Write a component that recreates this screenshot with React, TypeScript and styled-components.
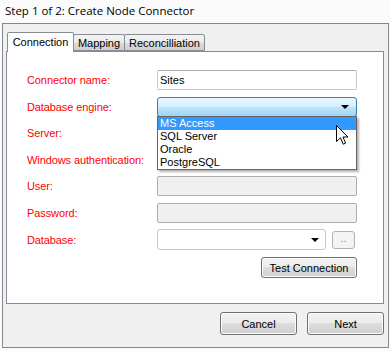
import React from "react";
import styled, { createGlobalStyle } from "styled-components";

const Global = createGlobalStyle`
  html, body { margin: 0; padding: 0; background: #fbfbfb; }
  body { font-family: "Liberation Sans", Arial, sans-serif; font-size: 11px; color: #000; }
  * { box-sizing: border-box; }
`;

const Window = styled.div`
  position: relative;
  width: 391px;
  height: 351px;
  background: #fbfbfb;
  overflow: hidden;
`;

const Title = styled.div`
  height: 23px;
  padding: 3px 0 0 5px;
  font-family: "Open Sans", "Noto Sans", sans-serif;
  font-size: 11.5px;
  line-height: 16px;
  color: #000;
`;

const Frame = styled.div`
  margin-left: 2px;
  width: 387px;
  height: 325px;
  border: 1px solid #828790;
  background: #f0f0f0;
  padding: 8px 4px 0 3px;
  display: flex;
  flex-direction: column;
`;

const TabStrip = styled.div`
  display: flex;
  align-items: flex-end;
  height: 19px;
  padding-left: 1px;
  position: relative;
  z-index: 2;
`;

const Tab = styled.div<{ $active?: boolean; $w: number }>`
  width: ${(p) => p.$w}px;
  height: ${(p) => (p.$active ? 20 : 17)}px;
  margin-bottom: ${(p) => (p.$active ? -1 : 0)}px;
  border: 1px solid #898c95;
  border-bottom: ${(p) => (p.$active ? "none" : "1px solid #898c95")};
  border-radius: 2px 2px 0 0;
  background: ${(p) =>
    p.$active ? "#ffffff" : "linear-gradient(#f3f3f3, #ebebeb 50%, #dddddd 51%, #cfcfcf)"};
  display: flex;
  align-items: center;
  justify-content: center;
  padding-bottom: ${(p) => (p.$active ? 1 : 0)}px;
  white-space: nowrap;
  & + & { margin-left: -1px; }
`;

const Panel = styled.div`
  height: 253px;
  border: 1px solid #898c95;
  background: #ffffff;
  padding: 14px 0 0 20px;
`;

const Row = styled.div<{ $h: number }>`
  display: grid;
  grid-template-columns: 130px 200px;
  align-items: center;
  height: ${(p) => p.$h}px;
`;

const Label = styled.div`
  color: #ff0000;
  white-space: nowrap;
  letter-spacing: -0.1px;
`;

const TextBox = styled.div<{ $disabled?: boolean }>`
  height: 20px;
  width: 200px;
  border: 1px solid ${(p) => (p.$disabled ? "#adadad" : "#c5c9cf")};
  border-top-color: ${(p) => (p.$disabled ? "#adadad" : "#abadb3")};
  border-radius: 2px;
  background: ${(p) => (p.$disabled ? "#f0f0f0" : "#ffffff")};
  padding: 0 2px;
  display: flex;
  align-items: center;
`;

const ComboWrap = styled.div`
  position: relative;
  z-index: 3;
`;

const Combo = styled.div<{ $hot?: boolean; $w: number }>`
  width: ${(p) => p.$w}px;
  height: ${(p) => (p.$hot ? 20 : 21)}px;
  border: 1px solid ${(p) => (p.$hot ? "#3c7fb1" : "#c5c9cf")};
  border-radius: 3px;
  background: ${(p) =>
    p.$hot
      ? "linear-gradient(#eaf6fd, #d9f0fc 45%, #bee6fd 50%, #9fd3f1)"
      : "#ffffff"};
  display: flex;
  align-items: center;
  justify-content: flex-end;
  padding-right: ${(p) => (p.$hot ? 7 : 6)}px;
`;

const Arrow = styled.div`
  width: 0;
  height: 0;
  border-left: 4px solid transparent;
  border-right: 4px solid transparent;
  border-top: 4px solid #000;
  margin-top: 1px;
`;

const DropList = styled.div`
  position: absolute;
  left: 0;
  top: 19px;
  width: 200px;
  height: 54px;
  border: 1px solid #646464;
  background: #ffffff;
  box-shadow: 2px 2px 2px rgba(0, 0, 0, 0.3);
`;

const Item = styled.div<{ $sel?: boolean }>`
  height: 13px;
  line-height: 13px;
  padding-left: 2px;
  background: ${(p) => (p.$sel ? "#3399ff" : "transparent")};
  color: ${(p) => (p.$sel ? "#ffffff" : "#000000")};
`;

const Check = styled.div`
  width: 13px;
  height: 13px;
  border: 1px solid #8e8f8f;
  background: #f4f4f4;
`;

const DbField = styled.div`
  display: flex;
  align-items: center;
  gap: 6px;
`;

const Button = styled.button<{ $w: number; $h: number }>`
  width: ${(p) => p.$w}px;
  height: ${(p) => p.$h}px;
  border: 1px solid #707070;
  border-radius: 3px;
  background: linear-gradient(#f2f2f2, #ebebeb 49%, #dddddd 50%, #cfcfcf);
  box-shadow: inset 0 0 0 1px #fcfcfc;
  font-family: "Liberation Sans", Arial, sans-serif;
  font-size: 11px;
  color: #000;
  padding: 0;
  display: flex;
  align-items: center;
  justify-content: center;
`;

const SmallButton = styled.button`
  width: 23px;
  height: 18px;
  border: 1px solid #adb2b5;
  border-radius: 3px;
  background: #f4f4f4;
  font-family: "Liberation Sans", Arial, sans-serif;
  font-size: 11px;
  color: #8a8a8a;
  padding: 0 0 4px;
  display: flex;
  align-items: flex-end;
  justify-content: center;
`;

const TestRow = styled.div`
  width: 330px;
  display: flex;
  justify-content: flex-end;
  margin-top: 4px;
`;

const Footer = styled.div`
  display: flex;
  justify-content: flex-end;
  gap: 10px;
  margin-top: 8px;
`;

const Cursor = styled.svg`
  position: absolute;
  left: 336px;
  top: 125px;
  z-index: 10;
`;

export default function App() {
  return (
    <Window>
      <Global />
      <Title>Step 1 of 2: Create Node Connector</Title>
      <Frame>
        <TabStrip>
          <Tab $active $w={67}>Connection</Tab>
          <Tab $w={52}>Mapping</Tab>
          <Tab $w={81}>Reconcilliation</Tab>
        </TabStrip>
        <Panel>
          <Row $h={27}>
            <Label>Connector name:</Label>
            <TextBox>Sites</TextBox>
          </Row>
          <Row $h={27}>
            <Label>Database engine:</Label>
            <ComboWrap>
              <Combo $hot $w={200}>
                <Arrow />
              </Combo>
              <DropList>
                <Item $sel>MS Access</Item>
                <Item>SQL Server</Item>
                <Item>Oracle</Item>
                <Item>PostgreSQL</Item>
              </DropList>
            </ComboWrap>
          </Row>
          <Row $h={26}>
            <Label>Server:</Label>
            <TextBox />
          </Row>
          <Row $h={27}>
            <Label>Windows authentication:</Label>
            <Check />
          </Row>
          <Row $h={26}>
            <Label>User:</Label>
            <TextBox $disabled />
          </Row>
          <Row $h={27}>
            <Label>Password:</Label>
            <TextBox $disabled />
          </Row>
          <Row $h={27}>
            <Label>Database:</Label>
            <DbField>
              <Combo $w={169}>
                <Arrow />
              </Combo>
              <SmallButton>..</SmallButton>
            </DbField>
          </Row>
          <TestRow>
            <Button $w={96} $h={21}>Test Connection</Button>
          </TestRow>
        </Panel>
        <Footer>
          <Button $w={77} $h={23}>Cancel</Button>
          <Button $w={77} $h={23}>Next</Button>
        </Footer>
      </Frame>
      <Cursor width="13" height="21" viewBox="0 0 13 21">
        <path
          d="M0.5 0.5 L0.5 16.5 L4.5 12.8 L7.2 19.2 L9.6 18.2 L7 12 L12 12 Z"
          fill="#ffffff"
          stroke="#000000"
          strokeWidth="1"
          strokeLinejoin="miter"
        />
      </Cursor>
    </Window>
  );
}
